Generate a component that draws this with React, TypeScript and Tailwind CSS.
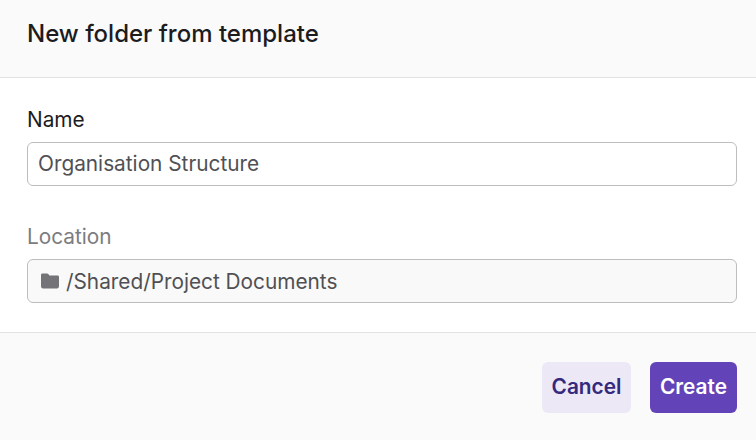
export default function App() {
  return (
    <div className="flex h-[440px] w-[756px] flex-col bg-white font-['Inter',sans-serif] text-[#1c1c1f]">
      {/* header */}
      <div className="h-[78px] shrink-0 border-b border-[#e2e2e4] bg-[#fafafa] px-[27px] pt-[19px]">
        <h1 className="text-[24px] leading-[30px] font-medium">New folder from template</h1>
      </div>

      {/* form */}
      <div className="flex h-[254px] shrink-0 flex-col pl-[27px] pr-[19px] pt-[30px]">
        <label className="text-[20.8px] leading-[24px]">Name</label>
        <div className="mt-[10px] flex h-[44px] items-center rounded-[6px] border border-[#bdbdc0] bg-white px-[10px] text-[20.8px] text-[#505054]">
          Organisation Structure
        </div>

        <label className="mt-[39px] text-[20.8px] leading-[24px] text-[#7c7c80]">Location</label>
        <div className="mt-[10px] flex h-[44px] items-center gap-[6px] rounded-[6px] border border-[#bdbdc0] bg-[#f9f9f9] px-[12px] text-[20.8px] text-[#505054]">
          <svg width="20" height="16" viewBox="0 0 20 16" fill="#737378">
            <path d="M2.500 .5h4.600c.5 0 .9.2 1.200.6L9.400 2.500h8.100c1 0 1.500.6 1.500 1.500v9c0 1.500-.7 2.500-2 2.500H3c-1.300 0-2-1-2-2.500V2C1 1.100 1.600 .5 2.500 .5z" />
          </svg>
          <span className="pt-[2px]">/Shared/Project Documents</span>
        </div>
      </div>

      {/* footer */}
      <div className="flex flex-1 items-start justify-end gap-[19px] border-t border-[#e2e2e4] bg-[#fafafa] pr-[19px] pt-[29px]">
        <button className="flex h-[51px] w-[89px] items-center justify-center rounded-[6px] bg-[#ece8f6] pb-[2px] text-[20.8px] font-semibold text-[#35297e]">
          Cancel
        </button>
        <button className="flex h-[51px] w-[87px] items-center justify-center rounded-[6px] bg-[#6243b8] pb-[2px] text-[20.8px] font-semibold text-white">
          Create
        </button>
      </div>
    </div>
  );
}
